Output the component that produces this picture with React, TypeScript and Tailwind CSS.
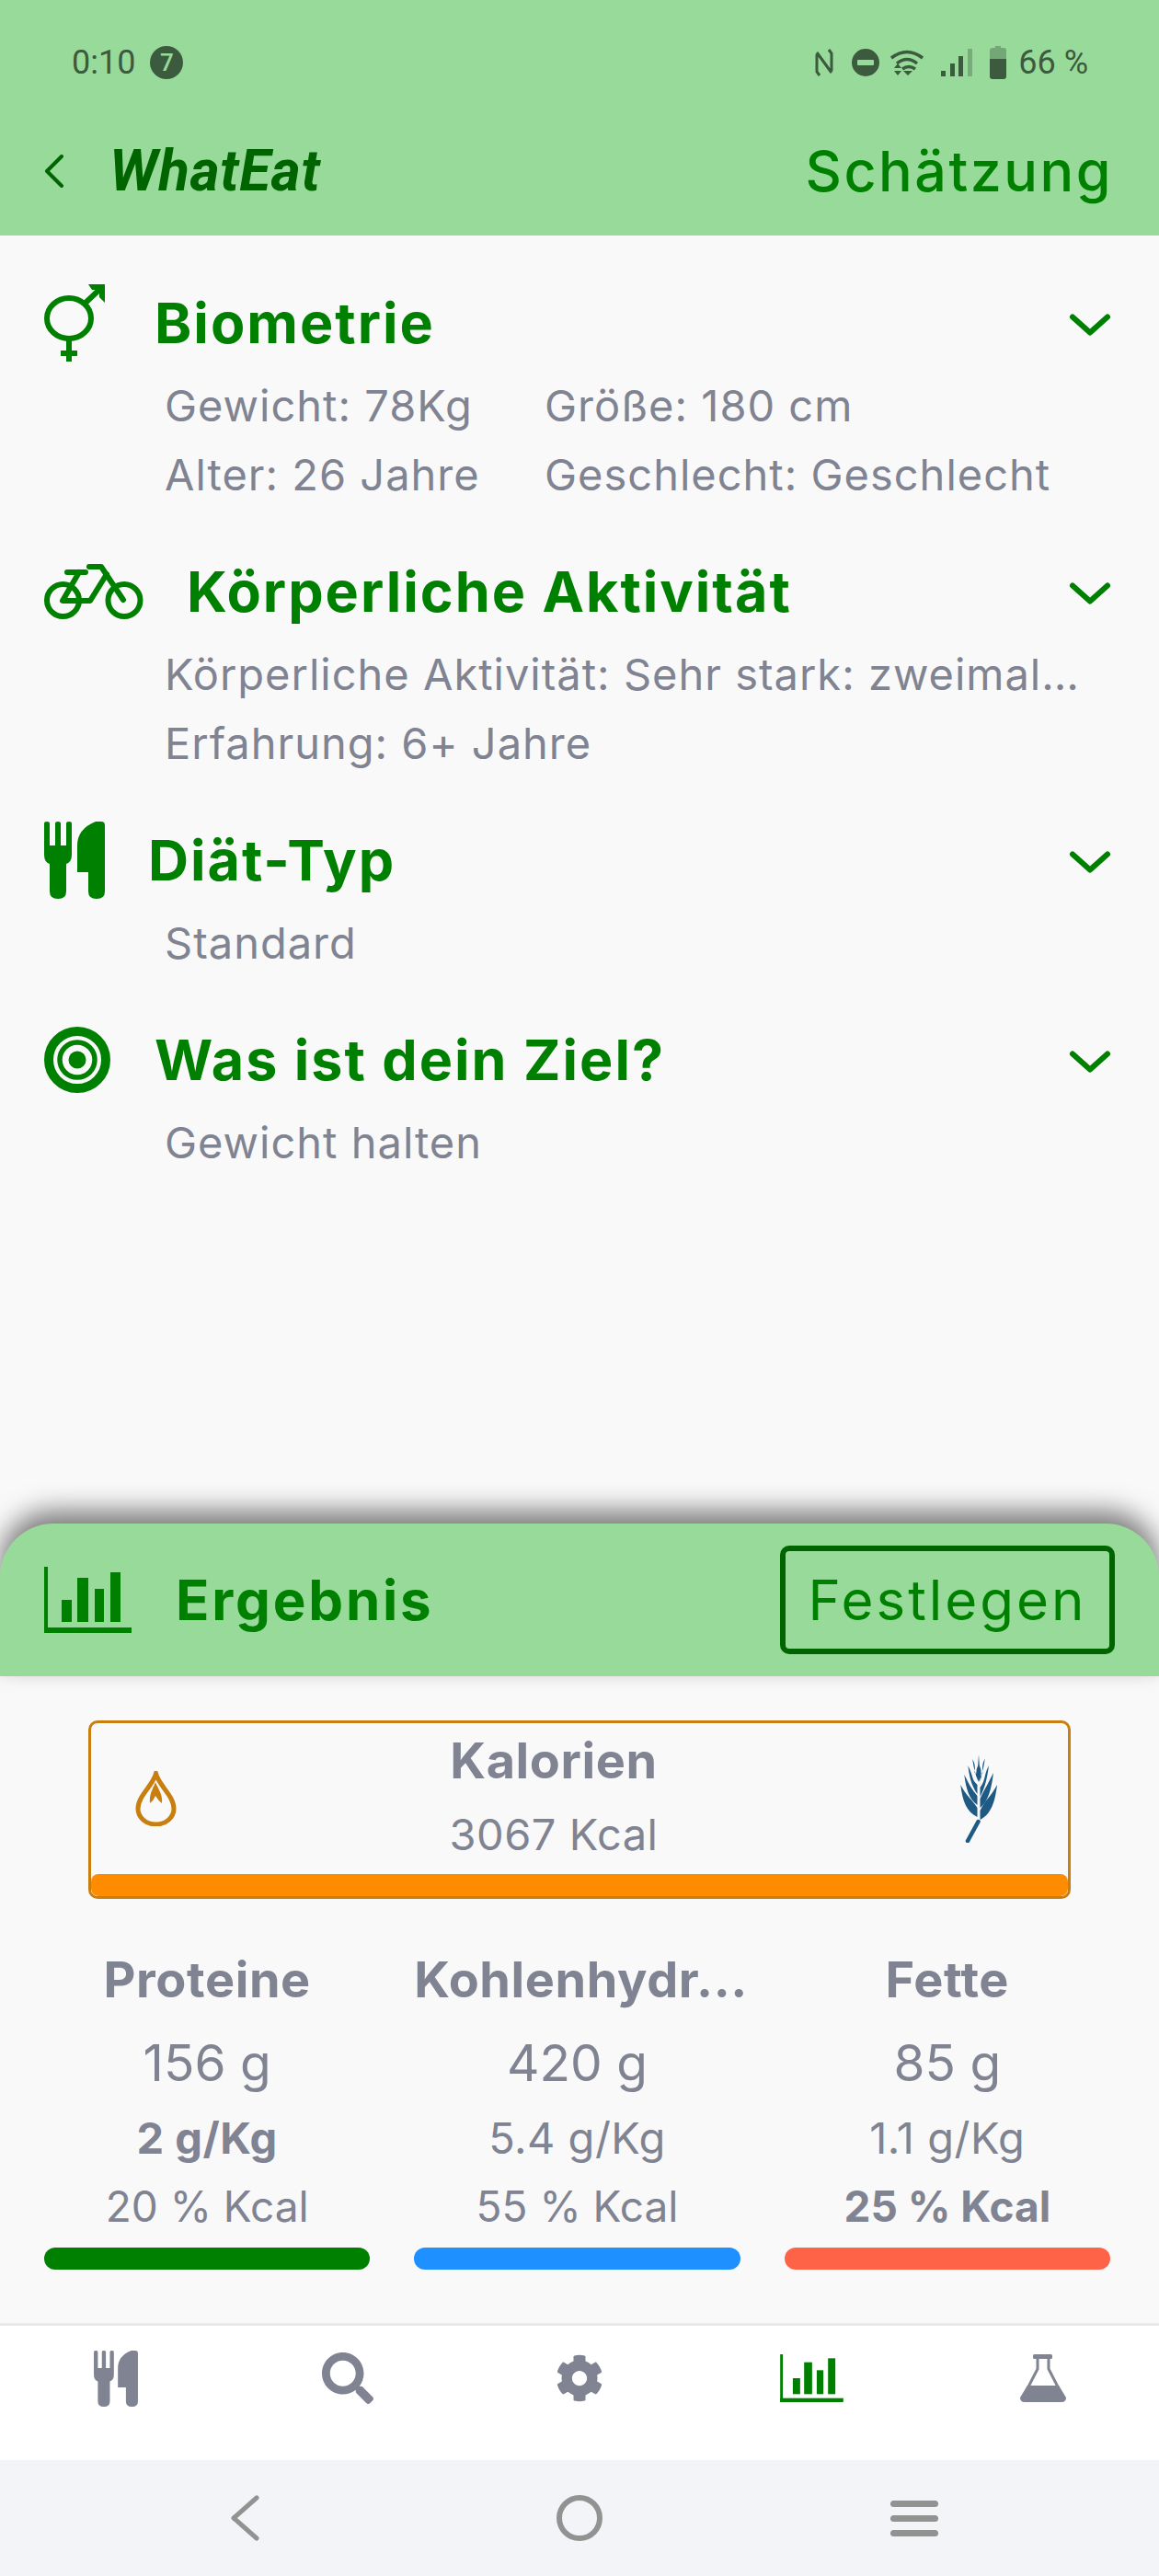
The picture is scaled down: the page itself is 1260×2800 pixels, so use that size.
import { ReactNode } from "react";
import { FaCog, FaSearch } from "react-icons/fa";

const GREEN = "#008000";

function ForkKnife({ className, color }: { className: string; color: string }) {
  return (
    <svg viewBox="0 0 66 84" className={className} fill={color}>
      <path d="M0 2Q0 0 3 0Q6 0 6 2V26H12V2Q12 0 15 0Q18 0 18 2V26H24V2Q24 0 27 0Q30 0 30 2V36Q30 44 24 46V76Q24 84 15 84Q6 84 6 76V46Q0 44 0 36Z" />
      <path d="M56 0H62Q66 0 66 4V76Q66 84 57 84Q48 84 48 76V55H36V26Q36 8 56 0Z" />
    </svg>
  );
}

function ChartIcon({ className }: { className: string }) {
  return (
    <svg viewBox="0 0 95 72" className={className} fill={GREEN}>
      <rect x="0" y="0" width="4" height="72" />
      <rect x="0" y="66" width="95" height="6" />
      <rect x="19" y="36" width="11" height="24" />
      <rect x="36" y="12" width="12" height="48" />
      <rect x="55" y="24" width="10" height="36" />
      <rect x="72" y="6" width="11" height="54" />
    </svg>
  );
}

function GenderIcon() {
  return (
    <svg viewBox="0 0 66 84" className="w-[66px] h-[84px]" fill="none" stroke={GREEN} strokeWidth="6">
      <ellipse cx="27" cy="37" rx="24" ry="22" />
      <path d="M27 60V84M18 75H36" />
      <path d="M44 21L63 3" />
      <path d="M48 0H66V20L60 14V6H52Z" fill={GREEN} stroke="none" />
    </svg>
  );
}

function BikeIcon() {
  return (
    <svg viewBox="0 0 108 60" className="w-[108px] h-[60px]" fill="none" stroke={GREEN} strokeWidth="6" strokeLinecap="round" strokeLinejoin="round">
      <circle cx="20.5" cy="39.5" r="17.5" />
      <circle cx="87" cy="39.5" r="17.5" />
      <path d="M25 9H45M49 3H62L86 39M38 9L20 40H50L68 11" />
    </svg>
  );
}

function TargetIcon() {
  return (
    <svg viewBox="0 0 72 72" className="w-[72px] h-[72px]" fill="none" stroke={GREEN}>
      <circle cx="36" cy="36" r="31" strokeWidth="10" />
      <circle cx="36" cy="36" r="19" strokeWidth="5.5" />
      <circle cx="36" cy="36" r="9.5" fill={GREEN} stroke="none" />
    </svg>
  );
}

function FlameIcon() {
  return (
    <svg viewBox="0 0 45 60" className="w-[45px] h-[60px] shrink-0" fill="none" stroke="#c97f10" strokeWidth="5">
      <path d="M22.5 3C26 16 42 27 42 41A19.5 17 0 0 1 3 41C3 27 19 16 22.5 3Z" />
      <path d="M22 12C19 20 15 25 16 35Q20 32 22 27Q25 32 29 35C30 25 25 20 22 12Z" fill="#c97f10" stroke="none" />
    </svg>
  );
}

// ear of wheat: left tip x/y + base y, right tip x/y + base y, lowest pair first
const wheatLeaves = [
  [2.3, 33, 68, 42, 33, 71],
  [6.3, 22, 55, 38, 20, 58],
  [10.3, 12, 43, 33, 12, 46],
  [15.3, 5, 31, 28.7, 4.5, 34],
];

function WheatIcon() {
  return (
    <svg viewBox="0 0 45 96" className="w-[45px] h-[96px] shrink-0" fill="#1f5a85">
      <path d="M21.5 73L10 94" fill="none" stroke="#1f5a85" strokeWidth="4.5" strokeLinecap="round" />
      <path d="M22 0L22.8 12Q27 20 22 30Q17 20 21.2 12Z" />
      {wheatLeaves.map(([lx, ly, lb, rx, ry, rb]) => (
        <g key={ly}>
          <path d={`M20.5 ${lb}C${lx + 6} ${lb - 6} ${lx + 2} ${ly + 17} ${lx} ${ly}C${lx + 6} ${ly + 12} 14 ${ly + 15} 20.5 ${lb - 10}Z`} />
          <path d={`M23.5 ${rb}C${rx - 6} ${rb - 6} ${rx - 2} ${ry + 17} ${rx} ${ry}C${rx - 6} ${ry + 12} 30 ${ry + 15} 23.5 ${rb - 10}Z`} />
        </g>
      ))}
    </svg>
  );
}

function FlaskIcon() {
  return (
    <svg viewBox="0 0 50 52" className="w-[50px] h-[52px]" fill="#808391">
      <rect x="14" y="0" width="21" height="5" rx="1.5" />
      <path d="M19 4V16L3 47H47L31 16V4" fill="none" stroke="#808391" strokeWidth="3" />
      <path d="M8 34H42L50 47Q50 52 45 52H5Q0 52 0 47Z" />
    </svg>
  );
}

function Chevron() {
  return (
    <svg viewBox="0 0 50 28" className="w-[50px] h-[28px] shrink-0 mt-[4px]" fill="none" stroke={GREEN} strokeWidth="6" strokeLinecap="round" strokeLinejoin="round">
      <path d="M6 5.5L25 22.5L44 5.5" />
    </svg>
  );
}

function StatusIcons() {
  const c = "#3b5a3e";
  return (
    <div className="flex items-center">
      <svg viewBox="0 0 20 30" className="w-[20px] h-[30px] ml-0" fill="none" stroke={c} strokeWidth="3">
        <path d="M2 6V25L5 29M18 24V5L15 1M2 4L18 26" />
      </svg>
      <svg viewBox="0 0 30 30" className="w-[30px] h-[30px] ml-[20px]">
        <circle cx="15" cy="15" r="15" fill={c} />
        <rect x="6" y="12" width="18" height="6" rx="1" fill="#98da9a" />
      </svg>
      <svg viewBox="0 0 36 30" className="w-[36px] h-[30px] ml-[12px]" fill="none" stroke={c} strokeWidth="3.5">
        <path d="M1 10Q18 -3 35 10M7 16Q18 7 29 16M13 22Q20 17 27 22" />
        <path d="M4 21L8 16L12 21ZM4 24H12L8 29ZM14 24H24L19 29Z" fill={c} stroke="none" />
      </svg>
      <svg viewBox="0 0 34 30" className="w-[34px] h-[30px] ml-[19px]" fill={c}>
        <rect x="0" y="24" width="5" height="6" />
        <rect x="10" y="16" width="5" height="14" />
        <rect x="19" y="8" width="5" height="22" />
        <rect x="29" y="0" width="5" height="30" opacity="0.35" />
      </svg>
      <svg viewBox="0 0 18 36" className="w-[18px] h-[36px] ml-[19px]" fill={c}>
        <path d="M6 0H12V2H15Q18 2 18 5V14H0V5Q0 2 3 2H6Z" opacity="0.4" />
        <path d="M0 14H18V33Q18 36 15 36H3Q0 36 0 33Z" />
      </svg>
      <span className="ml-[13px] text-[36px] leading-none text-[#3b5a3e] font-['Roboto',sans-serif]">66 %</span>
    </div>
  );
}

function Section({ icon, title, gap, children }: { icon: ReactNode; title: string; gap: string; children: ReactNode }) {
  return (
    <section className="mb-[50px]">
      <div className="flex items-center h-[80px] pr-[50px]">
        <div className="w-[48px]" />
        {icon}
        <h2 className={`${gap} flex-1 text-[61px] leading-[80px] font-bold text-[#008000] tracking-[2px]`}>{title}</h2>
        <Chevron />
      </div>
      <div className="mt-[12px] pl-[179px] text-[47px] leading-[75px] tracking-[1px] text-[#808391]">{children}</div>
    </section>
  );
}

function Macro({ title, grams, perKg, kcal, bar, boldKg, boldKcal }: { title: string; grams: string; perKg: string; kcal: string; bar: string; boldKg?: boolean; boldKcal?: boolean }) {
  return (
    <div className="text-center text-[#808391]">
      <div className="h-[80px] text-[54px] leading-[80px] font-bold tracking-[0.6px] whitespace-nowrap">{title}</div>
      <div className="mt-[10px] h-[80px] text-[55px] leading-[80px]">{grams}</div>
      <div className={`mt-[5px] h-[74px] text-[47px] leading-[74px] tracking-[0.5px] ${boldKg ? "font-bold" : ""}`}>{perKg}</div>
      <div className={`h-[74px] text-[46px] leading-[74px] ${boldKcal ? "font-bold" : ""}`}>{kcal}</div>
      <div className={`mt-[8px] h-[24px] rounded-full ${bar}`} />
    </div>
  );
}

export default function App() {
  return (
    <div className="w-[1260px] h-[2800px] flex flex-col bg-[#f9f9f9] overflow-hidden font-['Inter',sans-serif]">
      <header className="h-[256px] bg-[#98da9a] shrink-0">
        <div className="h-[136px] flex items-center justify-between pl-[78px] pr-[77px]">
          <div className="flex items-center gap-[16px] font-['Roboto',sans-serif] text-[#3b5a3e]">
            <span className="text-[36px] leading-none">0:10</span>
            <span className="w-[36px] h-[36px] rounded-full bg-[#3b5a3e] text-[#98da9a] text-[26px] font-medium leading-[36px] text-center">7</span>
          </div>
          <StatusIcons />
        </div>
        <div className="h-[100px] flex items-center pl-[48px] pr-[50px]">
          <svg viewBox="0 0 22 36" className="w-[22px] h-[36px]" fill="none" stroke="#006400" strokeWidth="4" strokeLinecap="round" strokeLinejoin="round">
            <path d="M19 2L3 18L19 34" />
          </svg>
          <span className="ml-[49px] flex-1 text-[62px] leading-none font-bold italic tracking-[0.6px] text-[#006400] font-['Roboto',sans-serif]">WhatEat</span>
          <span className="text-[61px] leading-none font-medium tracking-[2.5px] text-[#008000]">Schätzung</span>
        </div>
      </header>

      <main className="flex-1 pt-[55px]">
        <Section icon={<GenderIcon />} title="Biometrie" gap="ml-[54px]">
          <div className="flex">
            <div className="w-[413px]">Gewicht: 78Kg</div>
            <div>Größe: 180 cm</div>
          </div>
          <div className="flex">
            <div className="w-[413px]">Alter: 26 Jahre</div>
            <div>Geschlecht: Geschlecht</div>
          </div>
        </Section>
        <Section icon={<BikeIcon />} title="Körperliche Aktivität" gap="ml-[47px]">
          <div className="whitespace-nowrap">Körperliche Aktivität: Sehr stark: zweimal…</div>
          <div>Erfahrung: 6+ Jahre</div>
        </Section>
        <Section icon={<ForkKnife className="w-[66px] h-[84px]" color={GREEN} />} title="Diät-Typ" gap="ml-[47px]">
          <div>Standard</div>
        </Section>
        <Section icon={<TargetIcon />} title="Was ist dein Ziel?" gap="ml-[48px]">
          <div>Gewicht halten</div>
        </Section>
      </main>

      <section className="shrink-0">
        <div className="relative z-10 h-[166px] rounded-t-[58px] bg-[#98da9a] shadow-[0_-14px_28px_rgba(0,0,0,0.5)] flex items-center pl-[48px] pr-[48px]">
          <ChartIcon className="w-[95px] h-[72px]" />
          <h2 className="ml-[48px] flex-1 text-[60px] leading-none font-bold text-[#008000] tracking-[2.8px]">Ergebnis</h2>
          <button className="w-[364px] h-[118px] rounded-[10px] border-[6px] border-[#006400] text-[60px] leading-none tracking-[3px] text-[#008000]">Festlegen</button>
        </div>
        <div className="pt-[48px] pb-[58px]">
          <div className="mx-[96px] h-[194px] flex flex-col rounded-[10px] border-[3px] border-[#c97f10] overflow-hidden">
            <div className="h-[167px] flex items-center pl-[48px] pr-[74px]">
              <FlameIcon />
              <div className="flex-1 pr-[30px] text-center text-[#808391]">
                <div className="h-[78px] text-[54px] leading-[78px] font-bold tracking-[0.6px]">Kalorien</div>
                <div className="h-[82px] text-[47px] leading-[82px] tracking-[0.5px]">3067 Kcal</div>
              </div>
              <WheatIcon />
            </div>
            <div className="h-[24px] bg-[#ff8c00] rounded-[8px]" />
          </div>
          <div className="mt-[48px] grid grid-cols-3 gap-[48px] pl-[48px] pr-[53px]">
            <Macro title="Proteine" grams="156 g" perKg="2 g/Kg" kcal="20 % Kcal" bar="bg-[#008000]" boldKg />
            <Macro title="Kohlenhydr..." grams="420 g" perKg="5.4 g/Kg" kcal="55 % Kcal" bar="bg-[#1e90ff]" />
            <Macro title="Fette" grams="85 g" perKg="1.1 g/Kg" kcal="25 % Kcal" bar="bg-[#ff6347]" boldKcal />
          </div>
        </div>
      </section>

      <nav className="h-[149px] shrink-0 bg-white border-t-[3px] border-[#e8e8e8] grid grid-cols-5 pb-[32px] items-center justify-items-center">
        <ForkKnife className="w-[48px] h-[61px]" color="#808391" />
        <FaSearch className="w-[56px] h-[56px] text-[#808391]" />
        <FaCog className="w-[52px] h-[52px] text-[#808391]" />
        <ChartIcon className="w-[69px] h-[52px]" />
        <FlaskIcon />
      </nav>

      <div className="h-[126px] shrink-0 bg-[#f2f4f8] grid grid-cols-3 items-center justify-items-center px-[84px]">
        <svg viewBox="0 0 34 50" className="w-[34px] h-[50px]" fill="none" stroke="#929292" strokeWidth="5" strokeLinecap="round" strokeLinejoin="round">
          <path d="M30 3L5 25L30 47" />
        </svg>
        <div className="w-[50px] h-[50px] rounded-full border-[6px] border-[#929292]" />
        <div className="w-[52px] flex flex-col gap-[9px]">
          <div className="h-[7px] rounded-full bg-[#929292]" />
          <div className="h-[7px] rounded-full bg-[#929292]" />
          <div className="h-[7px] rounded-full bg-[#929292]" />
        </div>
      </div>
    </div>
  );
}
